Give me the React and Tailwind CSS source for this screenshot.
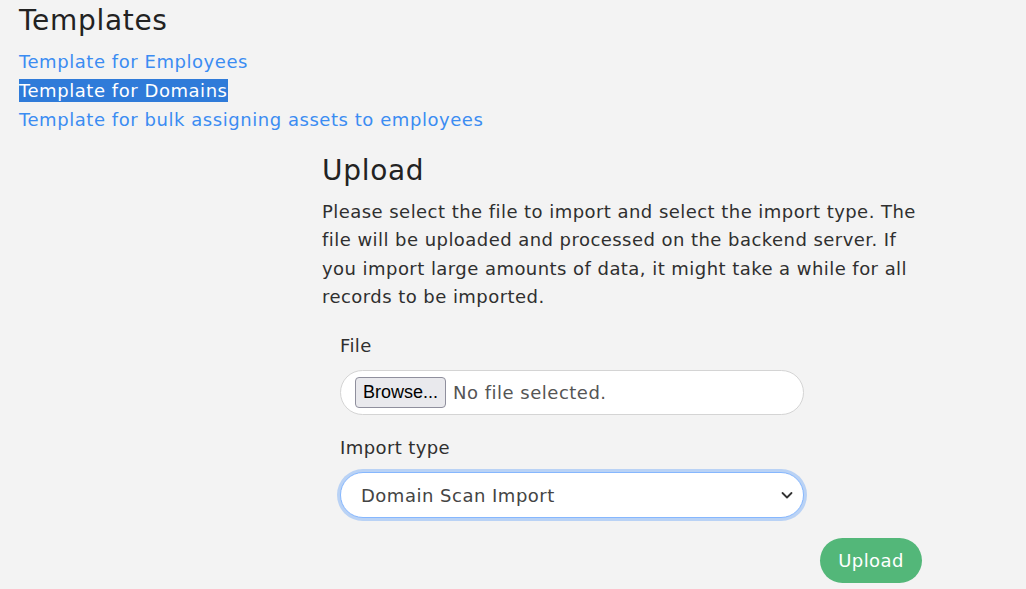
import React from "react";

export default function App() {
  const font = { fontFamily: '"DejaVu Sans", "Open Sans", sans-serif' };
  return (
    <div className="min-h-[589px] w-[1026px] bg-[#f3f3f3] text-[#2c2c2c] overflow-hidden" style={font}>
      <div className="pl-[19px] pt-[4px]">
        <h2 className="text-[28px] leading-[34px] tracking-[0.7px] text-[#222]">Templates</h2>
        <div className="mt-[9px] flex flex-col items-start text-[18px] leading-[29px] tracking-[0.55px] text-[#3b8cf2]">
          <span>Template for Employees</span>
          <span className="bg-[#2f7bd9] text-white leading-[23px] my-[3px]">Template for Domains</span>
          <span>Template for bulk assigning assets to employees</span>
        </div>
      </div>
      <div className="ml-[322px] mt-[20px] w-[640px]">
        <h3 className="text-[28px] leading-[34px] tracking-[0.7px] text-[#222]">Upload</h3>
        <p className="mt-[10px] text-[18px] leading-[28.3px] tracking-[0.45px] text-[#2f2f2f]">
          Please select the file to import and select the import type. The<br />
          file will be uploaded and processed on the backend server. If<br />
          you import large amounts of data, it might take a while for all<br />
          records to be imported.
        </p>
        <div className="ml-[18px] mt-[23px] w-[464px]">
          <div className="text-[18px] leading-[24px] tracking-[0.4px] text-[#2f2f2f]">File</div>
          <div className="mt-[12px] h-[45px] rounded-full border border-[#d4d4d4] bg-white flex items-center pl-[14px]">
            <div className="h-[31px] px-[7px] flex items-center rounded-[4px] border border-[#8f8f9d] bg-[#e9e9ed] text-[18px] text-black" style={{ fontFamily: '"Liberation Sans", Arial, sans-serif' }}>
              Browse...
            </div>
            <span className="ml-[7px] text-[18px] tracking-[0.5px] text-[#555]">No file selected.</span>
          </div>
          <div className="mt-[21px] text-[18px] leading-[24px] tracking-[0.4px] text-[#2f2f2f]">Import type</div>
          <div className="mt-[12px] h-[46px] rounded-full border border-[#86b7fe] bg-white flex items-center justify-between pl-[20px] pr-[6px] shadow-[0_0_0_3px_rgba(13,110,253,0.25)]">
            <span className="text-[18px] tracking-[0.5px] text-[#444]">Domain Scan Import</span>
            <svg width="16" height="16" viewBox="0 0 16 16" className="mr-[2px]">
              <path d="M3.5 6 L8 10.5 L12.5 6" fill="none" stroke="#333" strokeWidth="1.8" strokeLinecap="round" strokeLinejoin="round" />
            </svg>
          </div>
        </div>
        <div className="flex justify-end w-[600px] mt-[20px]">
          <div className="h-[45px] w-[102px] rounded-full bg-[#53b779] text-white text-[18px] tracking-[0.4px] flex items-center justify-center">
            Upload
          </div>
        </div>
      </div>
    </div>
  );
}
